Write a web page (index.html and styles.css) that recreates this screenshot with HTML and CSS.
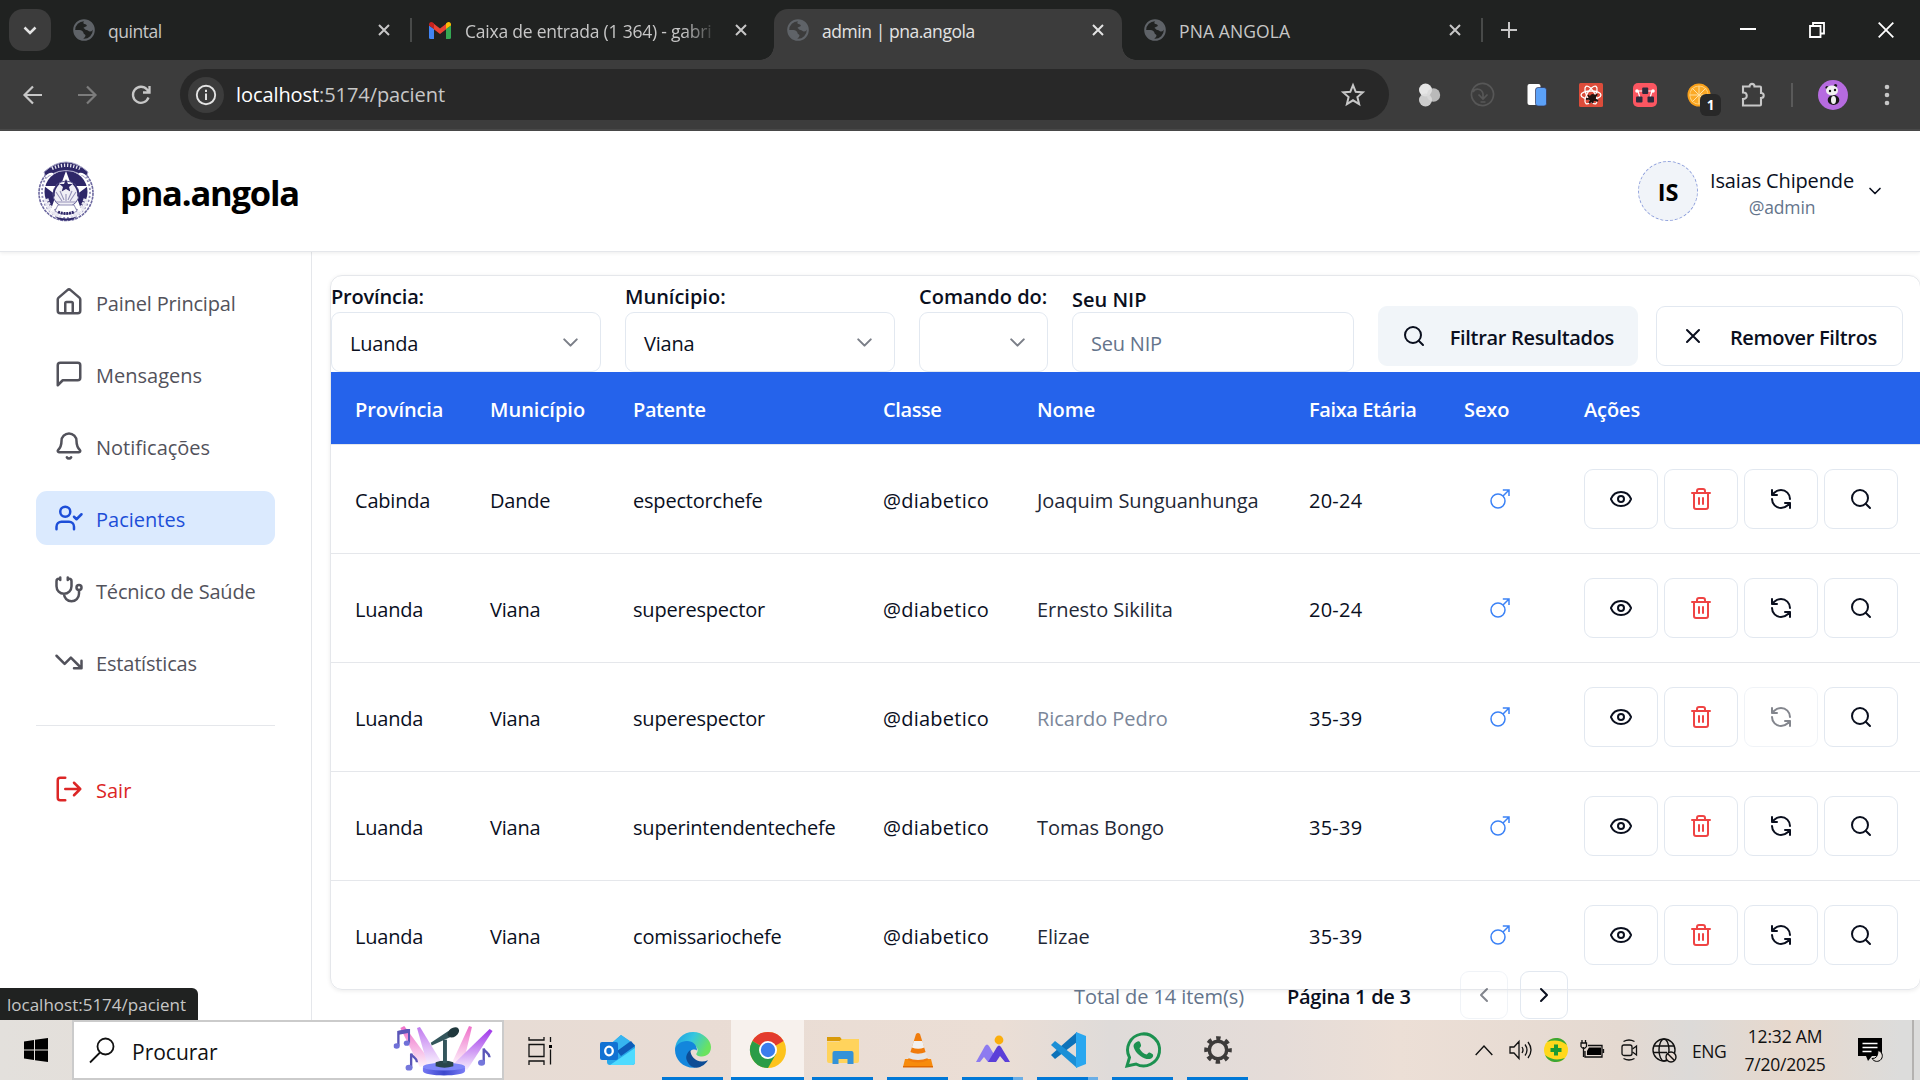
FILE: index.html
```html
<!DOCTYPE html>
<html lang="pt">
<head>
<meta charset="utf-8">
<title>admin | pna.angola</title>
<link rel="stylesheet" href="styles.css">
</head>
<body>
<svg class="sprite" aria-hidden="true">
  <symbol id="globe" viewBox="0 0 22 22"><circle cx="11" cy="11" r="9.800" fill="none" stroke="currentColor" stroke-width="2"/><path fill="currentColor" d="M12 1.500c4 .4 7.500 3.500 8.300 7.500 0 2-1.300 3.500-3.300 3.500-1.600 0-2-1.500-3.500-1.500s-1.700-1.600-3-2c.8-1.700 3.300-1 3.300-2.600-.2-1.400-2.300-1.200-3.300-2C10 3 11 2 12 1.500zM1.500 11h5c2 0 4 1.500 4 3 0 1.300 2 1.300 2 2.600 0 2-2.500 2.400-2.500 4.400C5 20 1.500 16 1.500 11z"/></symbol>
  <symbol id="close" viewBox="0 0 12 12"><path d="M1 1l10 10M11 1L1 11" fill="none" stroke="currentColor" stroke-width="2"/></symbol>
  <symbol id="eye" viewBox="0 0 24 24"><path d="M2.062 12.348a1 1 0 0 1 0-.696 10.750 10.750 0 0 1 19.876 0 1 1 0 0 1 0 .696 10.750 10.750 0 0 1-19.876 0"/><circle cx="12" cy="12" r="3"/></symbol>
  <symbol id="trash" viewBox="0 0 24 24"><path d="M3 6h18M19 6v14c0 1-1 2-2 2H7c-1 0-2-1-2-2V6M8 6V4c0-1 1-2 2-2h4c1 0 2 1 2 2v2M10 11v6M14 11v6"/></symbol>
  <symbol id="refresh" viewBox="0 0 24 24"><path d="M21 12a9 9 0 0 0-9-9 9.750 9.750 0 0 0-6.740 2.740L3 8M3 3v5h5M3 12a9 9 0 0 0 9 9 9.750 9.750 0 0 0 6.740-2.740L21 16M16 16h5v5"/></symbol>
  <symbol id="search" viewBox="0 0 24 24"><circle cx="11" cy="11" r="8"/><path d="m21 21-4.300-4.300"/></symbol>
  <symbol id="x" viewBox="0 0 24 24"><path d="M18 6 6 18M6 6l12 12"/></symbol>
  <symbol id="down" viewBox="0 0 24 24"><path d="m6 9 6 6 6-6"/></symbol>
  <symbol id="left" viewBox="0 0 24 24"><path d="m15 18-6-6 6-6"/></symbol>
  <symbol id="right" viewBox="0 0 24 24"><path d="m9 18 6-6-6-6"/></symbol>
  <symbol id="male" viewBox="0 0 20 20"><circle cx="8" cy="12" r="7"/><path d="M13 7l6-6M12.800 1H19v6"/></symbol>
  <symbol id="note2" viewBox="0 0 17 21"><path d="M5 17V3l11-2v13" fill="none" stroke="#5a55b8" stroke-width="2.400"/><path d="M5 4l11-2" stroke="#5a55b8" stroke-width="4"/><ellipse cx="3.200" cy="17.500" rx="3.200" ry="2.800" fill="#6f70d8"/><ellipse cx="13.500" cy="14.500" rx="3" ry="2.600" fill="#6f70d8"/></symbol>
  <symbol id="note1" viewBox="0 0 14 20"><path d="M6 17V2c1 4 6 4 6 9" fill="none" stroke="#5a55b8" stroke-width="2.400"/><ellipse cx="3.800" cy="16.500" rx="3.600" ry="3" fill="#7577dc"/></symbol>
</svg>

<div class="screen">
  <header class="tabs">
    <div class="tab-menu"><svg class="i24" viewBox="0 0 24 24"><path d="M6.500 9.500l5.500 5.500 5.500-5.500" fill="none" stroke="#e3e3e3" stroke-width="2.500"/></svg></div>
    <div class="tab tab-first"><svg class="fav"><use href="#globe"/></svg><span class="tab-title t-quintal">quintal</span><svg class="tab-x"><use href="#close"/></svg></div>
    <i class="tab-sep"></i>
    <div class="tab tab-mail">
      <svg class="gmail" viewBox="0 0 22 17"><path fill="#4285f4" d="M0 3.500 5 7v10H1.500A1.500 1.500 0 0 1 0 15.500z"/><path fill="#34a853" d="M22 3.500 17 7v10h3.500a1.500 1.500 0 0 0 1.500-1.500z"/><path fill="#ea4335" d="M4.500 1.500 11 6.500l6.500-5V7L11 12 4.500 7z"/><path fill="#c5221f" d="M0 2.500C0 0 2.500-.7 4.500.9L5 1.500V7L0 3.500z"/><path fill="#fbbc04" d="M22 2.500C22 0 19.500-.7 17.500.9L17 1.500V7l5-3.500z"/></svg>
      <span class="tab-title t-mail">Caixa de entrada (1 364) - gabri</span><svg class="tab-x"><use href="#close"/></svg></div>
    <div class="tab tab-active"><svg class="fav"><use href="#globe"/></svg><span class="tab-title t-admin">admin | pna.angola</span><svg class="tab-x"><use href="#close"/></svg></div>
    <div class="tab tab-last"><svg class="fav"><use href="#globe"/></svg><span class="tab-title t-pna">PNA ANGOLA</span><svg class="tab-x"><use href="#close"/></svg></div>
    <i class="tab-sep"></i>
    <svg class="tab-plus" viewBox="0 0 16 16"><path d="M8 0v16M0 8h16" stroke="#c7c7c7" stroke-width="2"/></svg>
    <div class="win">
      <svg viewBox="0 0 16 16"><path d="M0 7h16" stroke="#fff" stroke-width="2"/></svg>
      <svg viewBox="0 0 16 16"><path d="M1 4h10.500v11H1zM4 4V1h11v10.500h-3" fill="none" stroke="#fff" stroke-width="1.800"/></svg>
      <svg viewBox="0 0 16 16"><path d="M.7.7l14.600 14.600M15.300.7L.7 15.300" stroke="#fff" stroke-width="1.800"/></svg>
    </div>
  </header>

  <nav class="toolbar">
    <svg class="nav-i" viewBox="0 0 20 20"><path d="M19 10H2M10 1.500L1.500 10l8.500 8.500" fill="none" stroke="#c7c7c7" stroke-width="2.200"/></svg>
    <svg class="nav-i" viewBox="0 0 20 20"><path d="M1 10h17M10 1.500l8.500 8.500-8.500 8.500" fill="none" stroke="#7c7c7c" stroke-width="2.200"/></svg>
    <svg class="nav-i" viewBox="0 0 20 20"><path d="M17.500 12.500A8 8 0 1 1 16 4.500l2 2.500M18.500 1v6.500H12" fill="none" stroke="#c7c7c7" stroke-width="2.300"/></svg>
    <div class="omni">
      <div class="omni-info"><svg viewBox="0 0 22 22"><circle cx="11" cy="11" r="9.200" fill="none" stroke="#e3e3e3" stroke-width="1.900"/><path d="M11 9.500V16M11 5.800V8" stroke="#e3e3e3" stroke-width="2"/></svg></div>
      <span class="url"><b>localhost</b>:5174/pacient</span>
      <svg class="star" viewBox="0 0 24 24"><path d="M12 2.200l2.700 6.600 7.100.6-5.400 4.700 1.700 7L12 17.300l-6.100 3.800 1.700-7L2.200 9.400l7.100-.6z" fill="none" stroke="#c7c7c7" stroke-width="2"/></svg>
    </div>
    <div class="exts">
      <svg class="ext" viewBox="0 0 24 24"><circle cx="8.500" cy="7" r="6.500" fill="#e6e6e6"/><circle cx="8.500" cy="17" r="6.500" fill="#dcdcdc" opacity=".9"/><circle cx="16.500" cy="12" r="6.700" fill="#d8d8d8" opacity=".8"/></svg>
      <svg class="ext" viewBox="0 0 24 24"><path d="M2 17A11 11 0 1 1 6 21M2 17A11 11 0 0 0 8 22.200M2 9c2-4 9-4 10 2v5M7.500 11.500l4.500 4.500 4.500-4.500M9.500 19h5" fill="none" stroke="#575757" stroke-width="1.700"/></svg>
      <svg class="ext" viewBox="0 0 24 24"><rect x="2.500" y="1" width="13" height="21" rx="2" fill="#fff"/><rect x="10.500" y="4.500" width="11" height="18.500" rx="2.500" fill="#5ba1f8" stroke="#335" stroke-width=".7"/></svg>
      <svg class="ext" viewBox="0 0 24 24"><rect width="24" height="24" rx="1.500" fill="#dc4c3a"/><g fill="none" stroke="#fff" stroke-width="1.300"><ellipse cx="12" cy="12" rx="10" ry="4"/><ellipse cx="12" cy="12" rx="10" ry="4" transform="rotate(60 12 12)"/><ellipse cx="12" cy="12" rx="10" ry="4" transform="rotate(120 12 12)"/></g><path d="M9 12l5 8M18 11l-4 6M7 16l6-1 6 3M10 20l4-4" stroke="#20120f" stroke-width="2"/><ellipse cx="13.500" cy="15" rx="3.300" ry="4" fill="#20120f" transform="rotate(30 13.500 15)"/></svg>
      <svg class="ext" viewBox="0 0 24 24"><rect width="24" height="24" rx="5" fill="#fb5661"/><path d="M4 8h16M5 8l2 7M19 8l-2 7" stroke="#fff" stroke-width="1.200"/><circle cx="4" cy="8" r="1.800" fill="#fff"/><circle cx="20" cy="8" r="1.800" fill="#fff"/><rect x="9.200" y="4.500" width="6" height="6.500" rx="1" fill="#2d2a3d"/><rect x="3" y="13.500" width="6.500" height="6" rx="1" fill="#2d2a3d"/><rect x="14.500" y="13.500" width="6.500" height="6" rx="1" fill="#2d2a3d"/></svg>
      <div class="ext orange"><svg viewBox="0 0 24 24"><circle cx="12" cy="12" r="11.500" fill="#f9a01b"/><circle cx="12" cy="12" r="9.600" fill="#ffd98a"/><circle cx="12" cy="12" r="8.800" fill="#fba926"/><path d="M12 3v18M3 12h18M5.500 5.500l13 13M18.500 5.500l-13 13" stroke="#ffe0a0" stroke-width="1"/></svg><span class="badge">1</span></div>
      <svg class="ext" viewBox="0 0 24 24"><path d="M2 3.500h6.500c0-3.500 5-3.500 5 0H19a1 1 0 0 1 1 1V10c3.600 0 3.600 5 0 5v6.500a1 1 0 0 1-1 1H2v-6.500c5 0 5-6.500 0-6.500z" fill="none" stroke="#c7c7c7" stroke-width="2.100"/></svg>
    </div>
    <i class="bar-sep"></i>
    <svg class="panda" viewBox="0 0 30 30"><circle cx="15" cy="15" r="15" fill="#b66be0"/><ellipse cx="15.500" cy="20" rx="5.800" ry="5" fill="#161616"/><ellipse cx="15.500" cy="20" rx="2.500" ry="4" fill="#f1f1f1"/><circle cx="9" cy="7.500" r="1.600" fill="#161616"/><circle cx="17.500" cy="5.500" r="1.600" fill="#161616"/><ellipse cx="14" cy="10.500" rx="6" ry="5" fill="#f1f1f1"/><circle cx="12" cy="11" r="1.200" fill="#161616"/><circle cx="17" cy="10" r="1.200" fill="#161616"/></svg>
    <svg class="dots" viewBox="0 0 6 22"><g fill="#c7c7c7"><circle cx="3" cy="3" r="2.300"/><circle cx="3" cy="11" r="2.300"/><circle cx="3" cy="19" r="2.300"/></g></svg>
  </nav>

  <div class="page">
    <header class="top">
      <svg class="crest" viewBox="0 0 56 60"><ellipse cx="28" cy="32" rx="27" ry="27.500" fill="#fff" stroke="#6d69a0" stroke-width="1.600" stroke-dasharray="3 .8"/><ellipse cx="28" cy="31" rx="24" ry="26" fill="none" stroke="#8f8cb5" stroke-width="1.800" stroke-dasharray="2 2"/><circle cx="28" cy="31" r="21.500" fill="#2e2768"/><path d="M8 38q4 14 15 17M48 38q-4 14-15 17" fill="none" stroke="#e6e5f0" stroke-width="5" stroke-dasharray="3 .7"/><path d="M28 10l5.500 15H50L38 34l6 17-16-9-16 9 6-17L6 25h16.500z" fill="#fff"/><circle cx="28" cy="33" r="13" fill="#f0eff6" stroke="#5a568f" stroke-width="1"/><path d="M21 22.500q-6 6-5 13M35 22.500q6 6 5 13" fill="none" stroke="#2e2768" stroke-width="1.600"/><path d="M28 18l2 5h4.500L31 26l1.300 4.500L28 28l-4.300 2.500L25 26l-3.500-3H26z" fill="#2e2768"/><path d="M18 31l6 9M22 30l4 9M28 33v7M34 30l-4 9M38 31l-6 9M18 41h20" stroke="#9592b8" stroke-width="1.100"/><path d="M20 44h16l3 6c-6 4-16 4-22 0z" fill="#fff" stroke="#8f8cb5"/><path d="M20 51q8 3 16 0" fill="none" stroke="#2e2768" stroke-width="2.800" stroke-dasharray="2 .8"/><path d="M17 55.500q11 4 22 0l-4 3q-7 2-14 0z" fill="#2e2768"/><path d="M6 11Q28-9 50 11l-2 6-6-4Q28 6 14 13l-6 4z" fill="#2e2768" stroke="#a9a6c8"/><path d="M14 7.500Q28 1 42 7.500" fill="none" stroke="#e6e5f0" stroke-width="3.500" stroke-dasharray="1.300 1.800"/><path d="M8 16q3-4 7-3M48 16q-3-4-7-3" fill="none" stroke="#fff" stroke-width="2"/></svg>
      <h1 class="brand">pna.angola</h1>
      <div class="avatar">IS</div>
      <div class="who"><span class="who-name">Isaias Chipende</span><span class="who-role">@admin</span></div>
      <svg class="ic who-down"><use href="#down"/></svg>
    </header>

    <div class="body">
      <aside class="side">
        <a class="item"><svg class="ic"><path transform="scale(1.25)" d="M15 21v-8a1 1 0 0 0-1-1h-4a1 1 0 0 0-1 1v8M3 10a2 2 0 0 1 .709-1.528l7-5.999a2 2 0 0 1 2.582 0l7 5.999A2 2 0 0 1 21 10v9a2 2 0 0 1-2 2H5a2 2 0 0 1-2-2z"/></svg><span class="tight">Painel Principal</span></a>
        <a class="item"><svg class="ic"><path transform="scale(1.25)" d="M21 15a2 2 0 0 1-2 2H7l-4 4V5a2 2 0 0 1 2-2h14a2 2 0 0 1 2 2z"/></svg><span>Mensagens</span></a>
        <a class="item"><svg class="ic"><path transform="scale(1.25)" d="M10.268 21a2 2 0 0 0 3.464 0M3.262 15.326A1 1 0 0 0 4 17h16a1 1 0 0 0 .74-1.673C19.410 13.956 18 12.499 18 8A6 6 0 0 0 6 8c0 4.499-1.411 5.956-2.738 7.326"/></svg><span>Notificações</span></a>
        <a class="item active"><svg class="ic"><g transform="scale(1.25)"><path d="m16 11 2 2 4-4M16 21v-2a4 4 0 0 0-4-4H6a4 4 0 0 0-4 4v2"/><circle cx="9" cy="7" r="4"/></g></svg><span>Pacientes</span></a>
        <a class="item"><svg class="ic"><g transform="scale(1.25)"><path d="M11 2v2M5 2v2M5 3H4a2 2 0 0 0-2 2v4a6 6 0 0 0 12 0V5a2 2 0 0 0-2-2h-1M8 15a6 6 0 0 0 12 0v-3"/><circle cx="20" cy="10" r="2"/></g></svg><span class="tight">Técnico de Saúde</span></a>
        <a class="item"><svg class="ic"><path transform="scale(1.25)" d="M22 17l-8.500-8.500-5 5L2 7M16 17h6v-6"/></svg><span class="tight">Estatísticas</span></a>
        <hr class="rule">
        <a class="item exit"><svg class="ic"><path transform="scale(1.25)" d="M9 21H5a2 2 0 0 1-2-2V5a2 2 0 0 1 2-2h4M16 17l5-5-5-5M21 12H9"/></svg><span>Sair</span></a>
      </aside>

      <main class="main">
        <section class="card">
          <div class="filters">
            <label class="field f-wide"><span class="lab tight">Província:</span><span class="box">Luanda<svg class="ic"><use href="#down"/></svg></span></label>
            <label class="field f-wide"><span class="lab">Munícipio:</span><span class="box">Viana<svg class="ic"><use href="#down"/></svg></span></label>
            <label class="field f-cmd"><span class="lab">Comando do:</span><span class="box"><svg class="ic"><use href="#down"/></svg></span></label>
            <label class="field f-nip"><span class="lab">Seu NIP</span><span class="box ph">Seu NIP</span></label>
            <button class="btn btn-fill"><svg class="ic"><use href="#search"/></svg><span>Filtrar Resultados</span></button>
            <button class="btn btn-line"><svg class="ic"><use href="#x"/></svg><span>Remover Filtros</span></button>
          </div>
          <div class="row head"><span>Província</span><span>Município</span><span>Patente</span><span>Classe</span><span>Nome</span><span>Faixa Etária</span><span>Sexo</span><span>Ações</span></div>
          <div class="row"><span>Cabinda</span><span>Dande</span><span>espectorchefe</span><span>@diabetico</span><span class="name">Joaquim Sunguanhunga</span><span>20-24</span><svg class="male"><use href="#male"/></svg><div class="acts"><b><svg class="ic"><use href="#eye"/></svg></b><b class="del"><svg class="ic"><use href="#trash"/></svg></b><b><svg class="ic"><use href="#refresh"/></svg></b><b><svg class="ic"><use href="#search"/></svg></b></div></div>
          <div class="row"><span>Luanda</span><span>Viana</span><span>superespector</span><span>@diabetico</span><span class="name">Ernesto Sikilita</span><span>20-24</span><svg class="male"><use href="#male"/></svg><div class="acts"><b><svg class="ic"><use href="#eye"/></svg></b><b class="del"><svg class="ic"><use href="#trash"/></svg></b><b><svg class="ic"><use href="#refresh"/></svg></b><b><svg class="ic"><use href="#search"/></svg></b></div></div>
          <div class="row"><span>Luanda</span><span>Viana</span><span>superespector</span><span>@diabetico</span><span class="name muted">Ricardo Pedro</span><span>35-39</span><svg class="male"><use href="#male"/></svg><div class="acts"><b><svg class="ic"><use href="#eye"/></svg></b><b class="del"><svg class="ic"><use href="#trash"/></svg></b><b class="off"><svg class="ic"><use href="#refresh"/></svg></b><b><svg class="ic"><use href="#search"/></svg></b></div></div>
          <div class="row"><span>Luanda</span><span>Viana</span><span>superintendentechefe</span><span>@diabetico</span><span class="name">Tomas Bongo</span><span>35-39</span><svg class="male"><use href="#male"/></svg><div class="acts"><b><svg class="ic"><use href="#eye"/></svg></b><b class="del"><svg class="ic"><use href="#trash"/></svg></b><b><svg class="ic"><use href="#refresh"/></svg></b><b><svg class="ic"><use href="#search"/></svg></b></div></div>
          <div class="row"><span>Luanda</span><span>Viana</span><span>comissariochefe</span><span>@diabetico</span><span class="name">Elizae</span><span>35-39</span><svg class="male"><use href="#male"/></svg><div class="acts"><b><svg class="ic"><use href="#eye"/></svg></b><b class="del"><svg class="ic"><use href="#trash"/></svg></b><b><svg class="ic"><use href="#refresh"/></svg></b><b><svg class="ic"><use href="#search"/></svg></b></div></div>
        </section>
        <footer class="pager"><span class="total">Total de 14 item(s)</span><span class="pages">Página 1 de 3</span><b class="off"><svg class="ic"><use href="#left"/></svg></b><b><svg class="ic"><use href="#right"/></svg></b></footer>
      </main>
    </div>
    <div class="status">localhost:5174/pacient</div>
  </div>

  <footer class="taskbar">
    <div class="start"><svg viewBox="0 0 24 24"><path d="M0 3.500L10 2v9.500H0zM11 1.800L24 0v11.500H11zM0 12.500h10V22L0 20.500zM11 12.500h13V24l-13-1.800z"/></svg></div>
    <div class="find">
      <svg class="lens" viewBox="0 0 26 26"><circle cx="16.500" cy="9.500" r="8" fill="none" stroke="#111" stroke-width="1.800"/><path d="M11 15.500L1 25.500" stroke="#111" stroke-width="1.800"/></svg>
      <span>Procurar</span>
      <svg class="mic" viewBox="0 0 102 52"><defs><linearGradient id="ba" x1="0" y1="0" x2="0" y2="1"><stop offset="0" stop-color="#ef6fc9"/><stop offset="1" stop-color="#fdf3fb"/></linearGradient><linearGradient id="bb" x1="0" y1="0" x2="0" y2="1"><stop offset="0" stop-color="#9f35ea"/><stop offset="1" stop-color="#f9f0fd"/></linearGradient><linearGradient id="bc" x1="0" y1="0" x2="0" y2="1"><stop offset="0" stop-color="#c07af0"/><stop offset="1" stop-color="#fbf4fe"/></linearGradient><linearGradient id="pd" x1="0" x2="1"><stop offset="0" stop-color="#7476f3"/><stop offset=".5" stop-color="#3c48cc"/><stop offset="1" stop-color="#7a7cf7"/></linearGradient></defs>
        <path d="M7 3l4-2 28 38-12 4z" fill="url(#ba)"/><path d="M24 3l3-1 22 36-14 4z" fill="url(#bc)"/><path d="M77 1l3 1-9 38H59z" fill="url(#ba)"/><path d="M98 4l3 2-26 40-14-6z" fill="url(#bb)"/>
        <path d="M30 43v4c0 6 43 6 43 0v-4z" fill="url(#pd)"/><ellipse cx="51.500" cy="42.500" rx="21.500" ry="4" fill="#7f86f8"/><path d="M43 38q9-3 18 0v4q-9 3-18 0z" fill="#29444a"/><path d="M50.500 15h4v24h-4z" fill="#34565c"/><path d="M38 18l18-12 5 5-22 10z" fill="#34565c"/><ellipse cx="61" cy="7.500" rx="6.500" ry="4.500" transform="rotate(-35 61 7.500)" fill="#20383d"/>
        <use href="#note2" x="0" y="4" width="17" height="21"/><use href="#note1" x="12" y="27" width="14" height="20"/><use href="#note1" x="86" y="22" width="14" height="20"/></svg>
    </div>
    <div class="apps">
      <div class="app plain view"><svg viewBox="0 0 24 24" class="s24"><path d="M1 -1v3h15V-1M1 27v-4h15v4M1 6.500h15v12H1zM22.500 -1v5M22.500 11.500v15" fill="none" stroke="#111" stroke-width="1.300"/><path d="M21 7h3v3h-3z"/></svg></div>
      <div class="app plain"><svg viewBox="0 0 36 30"><path d="M7 12L21 0l14 10v17a3 3 0 0 1-3 3H10a3 3 0 0 1-3-3z" fill="#28a8ea"/><path d="M12 8l9-8 9 6-14 12z" fill="#37b5f0"/><path d="M17 16L31 6l4 5-14 10z" fill="#0f5cb8"/><path d="M10 30l25-17v14a3 3 0 0 1-3 3z" fill="#4fdbff"/><rect y="7" width="18" height="18" rx="2" fill="#1272d3"/><ellipse cx="9" cy="16" rx="3.800" ry="4.300" fill="none" stroke="#fff" stroke-width="2.300"/></svg></div>
      <div class="app"><svg viewBox="0 0 36 36"><defs><linearGradient id="e1" x1="0" y1="0" x2="1" y2=".4"><stop offset="0" stop-color="#1b9de2"/><stop offset=".5" stop-color="#36c6e0"/><stop offset="1" stop-color="#6be35e"/></linearGradient></defs><path d="M0 18A18 18 0 0 1 18 0c10 0 18 8 18 15 0 6-4 9.500-9 9.500-4 0-6.500-1.500-5.500-3 3-3.500 0-9.500-6-9.500C8 12 1 15 0 18z" fill="url(#e1)"/><path d="M0 18c0-5 6-9 12-9 6 0 10 4 10 9.500-2-2-8-1-9 5-1 6 4 11 8 12.200C9 37 0 28 0 18z" fill="#1386dc"/><path d="M15.500 18c-3 2-5 6-4 9.500 1.500 5 6 8.500 10 8.200 5-.4 9.500-4 11.500-7.500-2 .8-4 1.300-6 1.300-7 0-12-6-11.500-11.500z" fill="#0d4c95"/></svg></div>
      <div class="app current"><svg viewBox="0 0 36 36"><circle cx="18" cy="18" r="18" fill="#fdc31c"/><path d="M18 18L2.400 9A18 18 0 0 1 33.600 9z" fill="#e33b2e"/><path d="M2.400 9A18 18 0 0 0 18 36l8-14-8-4z" fill="#2a9c47"/><circle cx="18" cy="18" r="9" fill="#fff"/><circle cx="18" cy="18" r="7.200" fill="#3b7ded"/></svg></div>
      <div class="app"><svg viewBox="0 0 36 36"><path d="M2 5h13l3 4H2z" fill="#d99a0a"/><path d="M2 9.500h12l3-2.500h17v22a2 2 0 0 1-2 2H4a2 2 0 0 1-2-2z" fill="#ffd35c"/><path d="M7.500 32V21a2 2 0 0 1 2-2h17a2 2 0 0 1 2 2v11h-6v-5h-9v5z" fill="#3492d8"/></svg></div>
      <div class="app"><svg viewBox="0 0 36 36"><path d="M5 27h26l2 8H3z" fill="#f78b0c"/><path d="M16 2q2-2 4 0l8 26q-10 5-20 0z" fill="#f07c0c"/><path d="M13.800 9h8.500l2 6.500q-6 2.500-12.500 0z" fill="#f1f1f1"/><path d="M10 20q8 3.500 16 0l2 6q-10 4-20 0z" fill="#e6e6e6"/><path d="M3 34h30v1.500H3z" fill="#e06900"/></svg></div>
      <div class="app two"><svg viewBox="0 0 36 36"><path d="M1 30l9-16q2-3 4 0l6 10-3 6h-4l-4-5-4 5z" fill="#8d7bf0"/><path d="M13 30l9-15q2-3 4 0l9 15h-5l-5-6-4 6z" fill="#5b3fd8"/><circle cx="24" cy="8" r="4.400" fill="#fbae0c"/></svg></div>
      <div class="app two"><svg viewBox="0 0 36 36"><path d="M27 0L1 23l4 4L27 10z" fill="#0d72b9"/><path d="M27 36L1 13l4-4 22 17z" fill="#1b8fd6"/><path d="M26 0l10 4v28l-10 4z" fill="#2aa7f0"/></svg></div>
      <div class="app"><svg viewBox="0 0 36 36"><path d="M2 34l2.500-8.500A16 16 0 1 1 11 32z" fill="none" stroke="#1c9150" stroke-width="3"/><path d="M12.500 9.500c2-.6 2.500 0 3.500 3.500.6 1.500-1.500 2.500-1.500 3.500 2 3.500 4 5 7 6 1.500-1 2-2.500 3-2 3.500 1.500 4 2 3.500 4-.7 2.500-5 3.200-8 2-6-2-11-8-11.500-12.500 0-2 2-4 4-4.500z" fill="#1c9150"/></svg></div>
      <div class="app"><svg viewBox="0 0 36 36"><circle cx="18" cy="18" r="8.700" fill="none" stroke="#3d3b3a" stroke-width="3.500"/><circle cx="18" cy="18" r="11.800" fill="none" stroke="#3d3b3a" stroke-width="4" stroke-dasharray="4.400 4.870" stroke-dashoffset="2.200"/></svg></div>
    </div>
    <div class="tray">
      <svg class="t-up" viewBox="0 0 18 12"><path d="M.7 11L9 2l8.300 9" fill="none" stroke="#111" stroke-width="1.400"/></svg>
      <svg class="t-vol" viewBox="0 0 23 20"><path d="M1 7h4l5-5.500v17L5 13H1zM13 7q2 3 0 6M16 4.500q4 5.500 0 11M19 2q6 8 0 16" fill="none" stroke="#111" stroke-width="1.300"/></svg>
      <svg class="t-360" viewBox="0 0 24 24"><circle cx="12" cy="12" r="12" fill="#ffd81c"/><path d="M3 4A12 12 0 0 1 23 7q-9-7-20-3zM21 20A12 12 0 0 1 1 17q9 7 20 3z" fill="#3ba638"/><path d="M12 6.500v11M6.500 12h11" stroke="#1d9a33" stroke-width="4"/></svg>
      <svg class="t-bat" viewBox="0 0 24 20"><path d="M8 5.500h14V17H5v-6M3.500 7v10M1 3h5.500v3.500q-2.700 4-5.500 0zM2 0v3M5.500 0v3M23.500 9v4" fill="none" stroke="#111" stroke-width="1.300"/><path d="M9 7.500h12v7.500H7v-4z"/></svg>
      <svg class="t-cam" viewBox="0 0 17 22"><rect x="1" y="6" width="10" height="10.500" rx="2" fill="none" stroke="#111" stroke-width="1.300"/><path d="M11.500 10l4-3v9l-4-3M2.500 2.500Q8-.5 13.500 2.500M2.500 19.500Q8 22.500 13.500 19.500" fill="none" stroke="#111" stroke-width="1.300"/></svg>
      <svg class="t-net" viewBox="0 0 25 25"><g fill="none" stroke="#111" stroke-width="1.400"><circle cx="12" cy="12" r="11"/><ellipse cx="12" cy="12" rx="5" ry="11"/><path d="M2 8h20M1 14.500h14"/></g><circle cx="19" cy="19" r="5" fill="#e6d9d1" stroke="#111" stroke-width="1.400"/><path d="M15.500 15.500l7 7" stroke="#111" stroke-width="1.400"/></svg>
      <span class="lang">ENG</span>
      <div class="clock"><span>12:32 AM</span><span>7/20/2025</span></div>
      <svg class="t-note" viewBox="0 0 25 25"><path d="M0 0h24v18H14l-4 5-2-5H0z"/><path d="M4.500 5.500h15M4.500 9.500h15M4.500 13.500h9" stroke="#fff" stroke-width="1.400"/><path d="M20 12.500a5.500 5.500 0 1 1-6 8q6 .5 6-8z" fill="#e6e0da" stroke="#000"/></svg>
    </div>
  </footer>
</div>
</body>
</html>
```
FILE: styles.css
```css
* { box-sizing: border-box; }
body { margin: 0; overflow: hidden; font-family: "Open Sans", "Noto Sans", sans-serif; }
svg { display: block; flex: none; overflow: visible; }
.sprite { position: absolute; width: 0; height: 0; }
.screen { width: 1920px; height: 1080px; display: flex; flex-direction: column; overflow: hidden; background: #fff; }
.screen span { white-space: nowrap; }
.ic { fill: none; stroke: currentColor; stroke-width: 2; stroke-linecap: round; stroke-linejoin: round; width: 20px; height: 20px; }

/* tab strip */
.tabs { height: 60px; flex: none; background: #202221; display: flex; align-items: center; padding-left: 9px; color: #c7c7c7; font-size: 17.500px; }
.tab-menu { width: 42px; height: 42px; border-radius: 14px; background: #3c3c3c; display: grid; place-items: center; }
.i24 { width: 24px; height: 24px; }
.tab { display: flex; align-items: center; height: 51px; }
.fav { width: 22px; height: 22px; color: #5f6368; }
.tab-x { width: 12px; height: 12px; margin-left: auto; }
.tab-title { margin-left: 13px; padding-top: 2px; letter-spacing: -.45px; }
.tab-title.t-pna { letter-spacing: .1px; }
.tab-first { width: 317px; margin-left: 22px; }
.tab-sep { width: 2px; height: 24px; background: #484a49; margin: 0 0 0 20px; }
.tab-mail { width: 318px; margin-left: 17px; }
.gmail { width: 22px; height: 17px; }
.tab-title.t-mail { width: 252px; margin-left: 14px; letter-spacing: -.22px; -webkit-mask-image: linear-gradient(90deg, #000 218px, transparent 254px); mask-image: linear-gradient(90deg, #000 218px, transparent 254px); }
.tab-active { position: relative; align-self: flex-end; width: 348px; margin-left: 27px; padding: 0 18px 9px 13px; background: #3c3c3c; border-radius: 14px 14px 0 0; color: #e3e3e3; }
.tab-active::before, .tab-active::after { content: ""; position: absolute; bottom: 0; width: 14px; height: 14px; }
.tab-active::before { left: -14px; background: radial-gradient(circle at 0 0, transparent 13.500px, #3c3c3c 14px); }
.tab-active::after { right: -14px; background: radial-gradient(circle at 100% 0, transparent 13.500px, #3c3c3c 14px); }
.tab-last { width: 317px; margin-left: 22px; }
.tab-plus { width: 16px; height: 16px; margin-left: 18px; }
.win { display: flex; gap: 53px; margin-left: auto; padding-right: 26px; }
.win svg { width: 16px; height: 16px; }

/* toolbar */
.toolbar { height: 71px; flex: none; background: #3c3c3c; border-bottom: 2px solid #4a4a4a; display: flex; align-items: center; padding-left: 23px; }
.nav-i { width: 20px; height: 20px; margin-right: 34px; }
.omni { width: 1209px; height: 51px; margin-left: -5px; border-radius: 26px; background: #282828; display: flex; align-items: center; padding: 0 24px 0 8px; }
.omni-info { width: 36px; height: 36px; border-radius: 50%; background: #3c3c3c; display: grid; place-items: center; }
.omni-info svg { width: 22px; height: 22px; }
.url { font-size: 20px; color: #c7c7c7; margin-left: 12px; letter-spacing: -.08px; }
.url b { font-weight: 400; color: #fff; }
.star { width: 24px; height: 24px; margin-left: auto; }
.exts { display: flex; gap: 30px; margin-left: 28px; }
.ext { width: 24px; height: 24px; }
.orange { position: relative; }
.badge { position: absolute; left: 13px; top: 11px; width: 21px; height: 22px; border-radius: 6px; background: #282828; color: #fff; font-size: 13.500px; font-weight: 700; line-height: 23px; text-align: center; }
.bar-sep { width: 2px; height: 24px; background: #5a5a5a; margin-left: 26px; }
.panda { width: 30px; height: 30px; margin-left: 25px; }
.dots { width: 6px; height: 22px; margin-left: 36px; }

/* page header */
.page { position: relative; height: 889px; flex: none; display: flex; flex-direction: column; color: #0a0f1e; font-size: 20px; }
.top { height: 121px; flex: none; display: flex; align-items: center; padding: 0 35px 0 38px; border-bottom: 1px solid #e5e7eb; box-shadow: 0 1px 4px rgba(0,0,0,.08); z-index: 1; }
.crest { width: 56px; height: 60px; }
.brand { margin: 3px 0 0 26px; font-size: 34.500px; font-weight: 700; letter-spacing: -1.200px; color: #000; }
.avatar { width: 60px; height: 60px; margin-left: auto; border: 1px dashed #8fa0dc; border-radius: 50%; background: #f1f4f9; display: grid; place-items: center; padding-top: 1px; font-size: 23.500px; font-weight: 700; color: #000; }
.who { display: flex; flex-direction: column; align-items: center; margin-left: 12px; width: 144px; line-height: 26px; padding-top: 6px; letter-spacing: -.15px; }
.who-role { font-size: 17.500px; color: #64748b; }
.who-down { margin-left: 11px; }

/* sidebar */
.body { flex: 1; display: flex; min-height: 0; }
.side { width: 312px; flex: none; border-right: 1px solid #e5e7eb; padding: 23px 36px 0; }
.item { display: flex; align-items: center; gap: 12px; height: 54px; margin-bottom: 18px; padding: 0 18px; border-radius: 11px; color: #52525b; }
.item .ic { width: 30px; height: 30px; }
.item span { padding-top: 2px; }
.tight { letter-spacing: -.18px; }
.active { background: #dbeafe; color: #1d4ed8; font-weight: 500; }
.rule { border: 0; height: 1px; background: #e5e7eb; margin: 36px 0; }
.exit { color: #dc2626; }

/* filters */
.main { flex: 1; padding: 23px 0 0 18px; }
.card { width: 1591px; height: 715px; border: 1px solid #e5e7eb; border-radius: 12px; box-shadow: 0 1px 4px rgba(0,0,0,.08); overflow: hidden; }
.filters { height: 96px; display: flex; align-items: flex-end; gap: 24px; }
.field { display: flex; flex-direction: column; }
.lab { font-weight: 600; line-height: 20px; margin-bottom: 5px; }
.f-nip .lab { margin-bottom: 2px; }
.box { height: 60px; border: 1px solid #e2e8f0; border-radius: 9px; padding: 2px 17px 0 18px; display: flex; align-items: center; letter-spacing: -.2px; }
.box .ic { width: 25px; height: 25px; margin: -2px 0 0 auto; color: #7b7f88; }
.f-wide { width: 270px; }
.f-cmd { width: 129px; }
.f-nip { width: 282px; }
.ph { color: #64748b; }
.btn { font: 600 20px "Open Sans", "Noto Sans", sans-serif; height: 60px; margin-bottom: 6px; border-radius: 9px; border: 1px solid #e2e8f0; background: #fff; color: #0a0f1e; display: flex; align-items: center; padding: 0 23px; letter-spacing: -.32px; }
.btn span { margin-left: auto; padding-top: 2px; }
.btn .ic { width: 24px; height: 24px; }
.btn-fill { width: 260px; background: #f1f5f9; border-color: #f1f5f9; }
.btn-line { width: 247px; margin-left: -6px; padding: 0 25px 0 24px; }

/* table */
.row { height: 109px; display: grid; grid-template-columns: 135px 143px 250px 154px 272px 155px 120px 360px; align-items: center; border-bottom: 1px solid #e5e7eb; }
.row > span { padding: 2px 0 0 24px; letter-spacing: -.2px; }
.row > span:nth-child(4), .row > span:nth-child(6) { letter-spacing: .25px; }
.row > .name { letter-spacing: -.05px; color: #1f2937; }
.row > .muted { color: #7b879a; }
.head { height: 73px; background: #2563eb; color: #fff; font-weight: 600; }
.head > span { padding-top: 2px; letter-spacing: -.1px; }
.head > span:nth-child(2) { letter-spacing: 0; }
.head > span:nth-child(3), .head > span:nth-child(4), .head > span:nth-child(6) { letter-spacing: -.4px; }
.male { width: 20px; height: 20px; justify-self: center; fill: none; stroke: #3b82f6; stroke-width: 1.500; }
.acts { display: flex; gap: 6px; padding-left: 24px; }
.acts b { width: 74px; height: 60px; border: 1px solid #e2e8f0; border-radius: 9px; display: grid; place-items: center; }
.acts .ic { width: 24px; height: 24px; }
.del { color: #ef4444; }
.off { opacity: .5; }

/* pagination */
.pager { position: relative; margin-top: -19px; display: flex; align-items: center; padding-left: 744px; }
.total { color: #64748b; width: 213px; padding-top: 2px; letter-spacing: -.08px; }
.pages { font-weight: 600; width: 173px; padding-top: 2px; letter-spacing: -.28px; }
.pager b { width: 48px; height: 48px; margin-right: 12px; border: 1px solid #e2e8f0; border-radius: 9px; display: grid; place-items: center; }
.pager .ic { width: 24px; height: 24px; }
.status { position: absolute; left: 0; bottom: 0; width: 198px; height: 32px; background: #202221; color: #c7c7c7; border-radius: 0 6px 0 0; font-size: 17px; line-height: 33px; padding-left: 7px; white-space: nowrap; }

/* taskbar */
.taskbar { height: 60px; flex: none; display: flex; color: #111; background: linear-gradient(90deg, #e3e0dc 0, #e6dcd5 420px, #e9dcd4 700px, #ebded5 1000px, #dfdbd9 1110px, #e5dcd8 1280px, #ecdfd6 1400px, #e4d9d1 1620px, #dcdad8 1690px, #e7d8cc 1790px, #dcdcdb 1900px, #dcdcdb 100%); }
.start { width: 72px; display: grid; place-items: center; }
.start svg { width: 24px; height: 24px; }
.find { width: 432px; height: 60px; background: #fff; border: 2px solid #cbcbcb; display: flex; align-items: center; padding-left: 15px; font-size: 21px; }
.lens { width: 26px; height: 26px; }
.find span { margin: 3px auto 0 17px; }
.mic { width: 101px; height: 51px; margin-right: 8px; }
.apps { display: flex; padding-left: 1px; }
.app { width: 61px; margin: 0 7px; height: 60px; display: grid; place-items: center; border-bottom: 3px solid #0078d7; padding-top: 3px; }
.app svg { width: 36px; height: 36px; }
.plain { border-color: transparent; }
.view { padding-right: 5px; }
.app .s24 { width: 24px; height: 24px; }
.current { width: 73px; margin: 0 1px; background: #f7f1ed; }
.two { border-image: linear-gradient(90deg, #0078d7 80%, #6aaee6 80%) 3; border-style: solid; border-width: 0 0 3px; }
.tray { margin-left: auto; display: flex; align-items: center; width: 445px; font-size: 17.500px; }
.t-up { width: 18px; height: 12px; }
.t-vol { width: 23px; height: 20px; margin-left: 16px; }
.t-360 { width: 24px; height: 24px; margin-left: 12px; }
.t-bat { width: 24px; height: 20px; margin-left: 12px; }
.t-cam { width: 17px; height: 22px; margin-left: 17px; }
.t-net { width: 25px; height: 25px; margin-left: 14px; }
.lang { margin-left: 15px; width: 51px; flex: none; letter-spacing: -.5px; padding-top: 1px; }
.clock { width: 84px; flex: none; display: flex; flex-direction: column; align-items: center; line-height: 28px; letter-spacing: -.2px; }
.t-note { width: 25px; height: 25px; margin-left: 31px; }
.tray::after { content: ""; width: 2px; flex: none; height: 60px; background: #b4b2b0; margin-left: 29px; }
```
